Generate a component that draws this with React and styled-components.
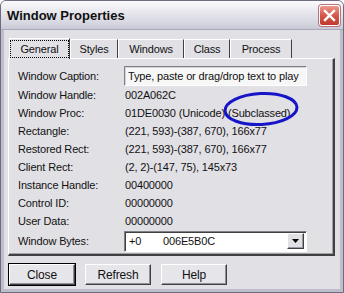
import styled, { createGlobalStyle } from 'styled-components';

const GlobalStyle = createGlobalStyle`
  html, body {
    margin: 0;
    padding: 0;
    background: #ffffff;
  }

  body {
    font-family: "Liberation Sans", Arial, sans-serif;
    font-size: 11px;
    color: #111;
  }
`;

const Window = styled.div`
  width: 344px;
  height: 293px;
  box-sizing: border-box;
  border: 1px solid #6c6b80;
  border-radius: 6px 6px 0 0;
  background: #bebdcc;
  display: flex;
  flex-direction: column;
  overflow: hidden;
`;

const TitleBar = styled.div`
  height: 28px;
  flex: none;
  display: flex;
  align-items: center;
  justify-content: space-between;
  padding: 0 3px 0 6px;
  background: linear-gradient(#fbfbfd 0%, #e9e9ef 35%, #d8d8e2 75%, #c9c9d6 100%);
  border-bottom: 1px solid #a9a8ba;
`;

const Title = styled.div`
  font-size: 13px;
  font-weight: bold;
  color: #101010;
`;

const CloseBox = styled.div`
  width: 21px;
  height: 21px;
  box-sizing: border-box;
  border: 1px solid #fff;
  border-radius: 3px;
  background: linear-gradient(#eb9a8d, #d4584a 50%, #c03a2e);
  box-shadow: 0 0 0 1px #b8747a;
  display: flex;
  align-items: center;
  justify-content: center;
`;

const Frame = styled.div`
  flex: 1;
  padding: 0 3px 3px;
  display: flex;
`;

const Body = styled.div`
  flex: 1;
  background: #e1e0e5;
  padding: 8px 5px 0 4px;
  display: flex;
  flex-direction: column;
  letter-spacing: -0.15px;
`;

const TabStrip = styled.div`
  display: flex;
  height: 20px;
  padding-left: 1px;
`;

const Tab = styled.div`
  width: ${(p) => p.$w}px;
  box-sizing: border-box;
  display: flex;
  align-items: center;
  justify-content: center;
  border-top: 1px solid #fff;
  border-left: 1px solid #fff;
  border-right: 1px solid #404040;
  position: relative;
  top: ${(p) => (p.$active ? 0 : 1)}px;
  height: ${(p) => (p.$active ? 21 : 19)}px;
  background: #e1e0e5;
  z-index: ${(p) => (p.$active ? 2 : 0)};
`;

const TabLabel = styled.span`
  padding: 2px 9px 2px;
  border: 1px dotted ${(p) => (p.$focus ? '#000' : 'transparent')};
  line-height: 12px;
`;

const Panel = styled.div`
  position: relative;
  height: 198px;
  box-sizing: border-box;
  border-top: 1px solid #fff;
  border-left: 1px solid #fff;
  border-right: 2px solid #404040;
  border-bottom: 2px solid #404040;
  box-shadow: inset -1px -1px 0 #a0a0a8;
  padding: 6px 0 0 9px;
  display: flex;
  flex-direction: column;
`;

const Row = styled.div`
  display: flex;
  align-items: center;
  height: ${(p) => p.$h || 18}px;
`;

const Label = styled.div`
  width: 106px;
  flex: none;
`;

const Value = styled.div`
  padding-left: 1px;
  white-space: nowrap;
`;

const TextBox = styled.div`
  width: 183px;
  height: 20px;
  box-sizing: border-box;
  border: 1px solid;
  border-color: #7f7f86 #fff #fff #7f7f86;
  box-shadow: inset 1px 1px 0 #d4d3d8;
  background: #f7f7f7;
  display: flex;
  align-items: center;
  padding-left: 3px;
  white-space: nowrap;
`;

const Combo = styled.div`
  width: 183px;
  height: 21px;
  box-sizing: border-box;
  border: 1px solid;
  border-color: #7f7f86 #fff #fff #7f7f86;
  box-shadow: inset 1px 1px 0 #404040;
  background: #fff;
  display: flex;
  align-items: center;
  padding: 2px 2px 2px 4px;
`;

const ComboText = styled.span`
  width: ${(p) => p.$w}px;
`;

const DropButton = styled.div`
  margin-left: auto;
  width: 17px;
  height: 16px;
  box-sizing: border-box;
  background: #e1e0e5;
  border: 1px solid;
  border-color: #fff #404040 #404040 #fff;
  box-shadow: inset -1px -1px 0 #9a99a4;
  display: flex;
  align-items: center;
  justify-content: center;
`;

const Ring = styled.svg`
  position: absolute;
  left: 212px;
  top: 33px;
  overflow: visible;
`;

const ButtonRow = styled.div`
  display: flex;
  gap: 10px;
  padding: 8px 0 0 1px;
`;

const Button = styled.div`
  width: 66px;
  height: 21px;
  box-sizing: border-box;
  display: flex;
  align-items: center;
  justify-content: center;
  background: #e6e5ea;
  border: 1px solid;
  border-color: #fff #404040 #404040 #fff;
  box-shadow: inset -1px -1px 0 #8f8e99;
  outline: ${(p) => (p.$default ? '1px solid #000' : 'none')};
  font-size: 12px;
`;

const rows = [
  ['Window Handle:', '002A062C'],
  ['Window Proc:', '01DE0030 (Unicode) (Subclassed)'],
  ['Rectangle:', '(221, 593)-(387, 670), 166x77'],
  ['Restored Rect:', '(221, 593)-(387, 670), 166x77'],
  ['Client Rect:', '(2, 2)-(147, 75), 145x73'],
  ['Instance Handle:', '00400000'],
  ['Control ID:', '00000000'],
  ['User Data:', '00000000'],
];

const tabs = [
  ['General', 61],
  ['Styles', 48],
  ['Windows', 66],
  ['Class', 46],
  ['Process', 62],
];

const App = () => (
  <>
    <GlobalStyle />
    <Window>
      <TitleBar>
        <Title>Window Properties</Title>
        <CloseBox>
          <svg width="13" height="13" viewBox="0 0 13 13">
            <path d="M2 2 L11 11 M11 2 L2 11" stroke="#fff" strokeWidth="2.4" strokeLinecap="square" />
          </svg>
        </CloseBox>
      </TitleBar>
      <Frame>
        <Body>
          <TabStrip>
            {tabs.map(([name, w], i) => (
              <Tab key={name} $w={w} $active={i === 0}>
                <TabLabel $focus={i === 0}>{name}</TabLabel>
              </Tab>
            ))}
          </TabStrip>
          <Panel>
            <Row $h={21}>
              <Label>Window Caption:</Label>
              <TextBox>Type, paste or drag/drop text to play</TextBox>
            </Row>
            {rows.map(([label, value]) => (
              <Row key={label}>
                <Label>{label}</Label>
                <Value>{value}</Value>
              </Row>
            ))}
            <Row $h={22}>
              <Label>Window Bytes:</Label>
              <Combo>
                <ComboText $w={34}>+0</ComboText>
                <ComboText $w={80}>006E5B0C</ComboText>
                <DropButton>
                  <svg width="7" height="4" viewBox="0 0 7 4">
                    <path d="M0 0 H7 L3.5 4 Z" fill="#000" />
                  </svg>
                </DropButton>
              </Combo>
            </Row>
            <Ring width="80" height="34" viewBox="0 0 80 34">
              <ellipse
                cx="40"
                cy="17"
                rx="36"
                ry="15.5"
                fill="none"
                stroke="#1616c8"
                strokeWidth="3"
                transform="rotate(-3 40 17)"
              />
            </Ring>
          </Panel>
          <ButtonRow>
            <Button $default>Close</Button>
            <Button>Refresh</Button>
            <Button>Help</Button>
          </ButtonRow>
        </Body>
      </Frame>
    </Window>
  </>
);

export default App;
